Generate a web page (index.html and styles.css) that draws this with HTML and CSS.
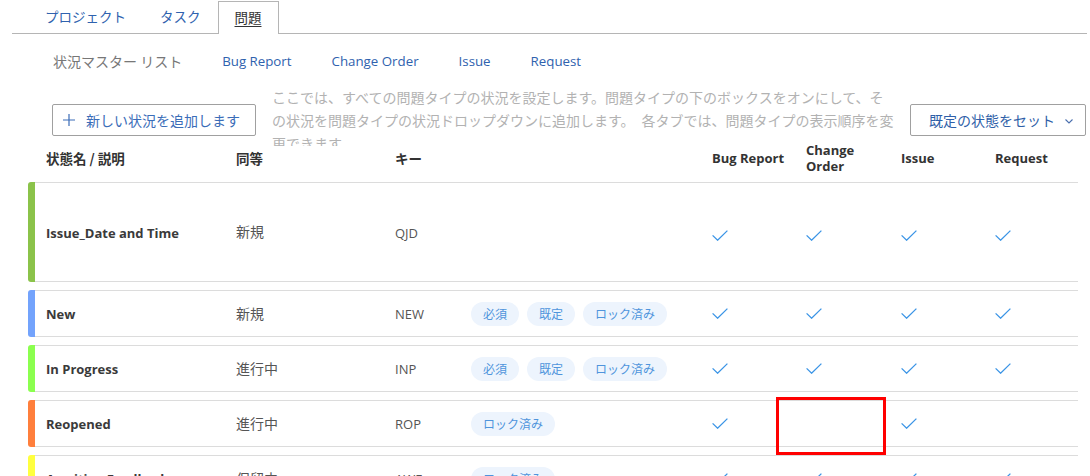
FILE: index.html
```html
<!DOCTYPE html>
<html lang="ja">
<head>
<meta charset="utf-8">
<title>問題</title>
<link rel="stylesheet" href="styles.css">
</head>
<body>
<nav class="tabs">
  <a class="tab">プロジェクト</a>
  <a class="tab">タスク</a>
  <a class="tab active"><span>問題</span></a>
</nav>

<div class="subnav">
  <span class="sub current">状況マスター リスト</span>
  <a class="sub">Bug Report</a>
  <a class="sub">Change Order</a>
  <a class="sub">Issue</a>
  <a class="sub">Request</a>
</div>

<div class="toolbar">
  <button class="btn add">
    <svg class="plus" width="12" height="12" viewBox="0 0 12 12"><path d="M6 0V12M0 6H12" stroke="#3b6db8" stroke-width="1.2" fill="none"/></svg>
    <span>新しい状況を追加します</span>
  </button>
  <p class="desc">ここでは、すべての問題タイプの状況を設定します。問題タイプの下のボックスをオンにして、その状況を問題タイプの状況ドロップダウンに追加します。　各タブでは、問題タイプの表示順序を変更できます。</p>
  <button class="btn select">
    <span>既定の状態をセット</span>
    <svg class="chev" width="8" height="5" viewBox="0 0 8 5"><path d="M0.5 0.5L4 4L7.5 0.5" stroke="#4a6fae" stroke-width="1.1" fill="none"/></svg>
  </button>
</div>

<div class="table">
  <div class="thead">
    <div>状態名 / 説明</div>
    <div>同等</div>
    <div>キー</div>
    <div></div>
    <div>Bug Report</div>
    <div>Change<br>Order</div>
    <div>Issue</div>
    <div>Request</div>
  </div>

  <div class="row tall">
    <div class="bar c-green"></div>
    <div class="cells">
      <div class="name">Issue_Date and Time</div>
      <div class="eq">新規</div>
      <div class="key">QJD</div>
      <div class="tags"></div>
      <div class="chk"><svg width="16" height="11" viewBox="0 0 16 11"><path d="M0.6 5.4L5.6 10.2L15.4 0.6"/></svg></div>
      <div class="chk"><svg width="16" height="11" viewBox="0 0 16 11"><path d="M0.6 5.4L5.6 10.2L15.4 0.6"/></svg></div>
      <div class="chk"><svg width="16" height="11" viewBox="0 0 16 11"><path d="M0.6 5.4L5.6 10.2L15.4 0.6"/></svg></div>
      <div class="chk"><svg width="16" height="11" viewBox="0 0 16 11"><path d="M0.6 5.4L5.6 10.2L15.4 0.6"/></svg></div>
    </div>
  </div>

  <div class="row">
    <div class="bar c-blue"></div>
    <div class="cells">
      <div class="name">New</div>
      <div class="eq">新規</div>
      <div class="key">NEW</div>
      <div class="tags"><span class="pill">必須</span><span class="pill">既定</span><span class="pill">ロック済み</span></div>
      <div class="chk"><svg width="16" height="11" viewBox="0 0 16 11"><path d="M0.6 5.4L5.6 10.2L15.4 0.6"/></svg></div>
      <div class="chk"><svg width="16" height="11" viewBox="0 0 16 11"><path d="M0.6 5.4L5.6 10.2L15.4 0.6"/></svg></div>
      <div class="chk"><svg width="16" height="11" viewBox="0 0 16 11"><path d="M0.6 5.4L5.6 10.2L15.4 0.6"/></svg></div>
      <div class="chk"><svg width="16" height="11" viewBox="0 0 16 11"><path d="M0.6 5.4L5.6 10.2L15.4 0.6"/></svg></div>
    </div>
  </div>

  <div class="row">
    <div class="bar c-lime"></div>
    <div class="cells">
      <div class="name">In Progress</div>
      <div class="eq">進行中</div>
      <div class="key">INP</div>
      <div class="tags"><span class="pill">必須</span><span class="pill">既定</span><span class="pill">ロック済み</span></div>
      <div class="chk"><svg width="16" height="11" viewBox="0 0 16 11"><path d="M0.6 5.4L5.6 10.2L15.4 0.6"/></svg></div>
      <div class="chk"><svg width="16" height="11" viewBox="0 0 16 11"><path d="M0.6 5.4L5.6 10.2L15.4 0.6"/></svg></div>
      <div class="chk"><svg width="16" height="11" viewBox="0 0 16 11"><path d="M0.6 5.4L5.6 10.2L15.4 0.6"/></svg></div>
      <div class="chk"><svg width="16" height="11" viewBox="0 0 16 11"><path d="M0.6 5.4L5.6 10.2L15.4 0.6"/></svg></div>
    </div>
  </div>

  <div class="row">
    <div class="bar c-orange"></div>
    <div class="cells">
      <div class="name">Reopened</div>
      <div class="eq">進行中</div>
      <div class="key">ROP</div>
      <div class="tags"><span class="pill">ロック済み</span></div>
      <div class="chk"><svg width="16" height="11" viewBox="0 0 16 11"><path d="M0.6 5.4L5.6 10.2L15.4 0.6"/></svg></div>
      <div class="chk"></div>
      <div class="chk"><svg width="16" height="11" viewBox="0 0 16 11"><path d="M0.6 5.4L5.6 10.2L15.4 0.6"/></svg></div>
      <div class="chk"></div>
    </div>
  </div>

  <div class="row">
    <div class="bar c-yellow"></div>
    <div class="cells">
      <div class="name">Awaiting Feedback</div>
      <div class="eq">保留中</div>
      <div class="key">AWF</div>
      <div class="tags"><span class="pill">ロック済み</span></div>
      <div class="chk"><svg width="16" height="11" viewBox="0 0 16 11"><path d="M0.6 5.4L5.6 10.2L15.4 0.6"/></svg></div>
      <div class="chk"><svg width="16" height="11" viewBox="0 0 16 11"><path d="M0.6 5.4L5.6 10.2L15.4 0.6"/></svg></div>
      <div class="chk"><svg width="16" height="11" viewBox="0 0 16 11"><path d="M0.6 5.4L5.6 10.2L15.4 0.6"/></svg></div>
      <div class="chk"><svg width="16" height="11" viewBox="0 0 16 11"><path d="M0.6 5.4L5.6 10.2L15.4 0.6"/></svg></div>
    </div>
  </div>
</div>

<div class="highlight"></div>
</body>
</html>
```

FILE: styles.css
```css
html, body {
  margin: 0;
  padding: 0;
  background: #fff;
  overflow: hidden;
}
body {
  width: 1090px;
  height: 476px;
  position: relative;
  font-family: "Open Sans", "Noto Sans CJK JP", sans-serif;
  color: #333;
}

/* tabs */
.tabs {
  display: flex;
  margin: 0 3px 0 12px;
  padding: 1px 0 0 16px;
  border-bottom: 1px solid #b5b5b5;
  height: 32px;
}
.tab {
  display: block;
  padding: 0 17px;
  height: 32px;
  line-height: 31px;
  font-size: 13.5px;
  color: #2f62ae;
  font-family: "Noto Sans CJK JP", sans-serif;
}
.tab.active {
  padding: 0 16px;
  border: 1px solid #b5b5b5;
  border-bottom: none;
  background: #fff;
  height: 33px;
  margin-bottom: -1px;
  color: #333;
  box-sizing: border-box;
}
.tab.active span {
  text-decoration: underline;
  text-underline-offset: 3px;
}

/* sub navigation */
.subnav {
  display: flex;
  gap: 40px;
  margin: 16px 0 0 53px;
  height: 22px;
  line-height: 22px;
  font-size: 13.3px;
}
.sub {
  color: #2f62ae;
}
.sub.current {
  color: #777;
  font-size: 14px;
  font-family: "Noto Sans CJK JP", sans-serif;
}

/* toolbar */
.toolbar {
  display: flex;
  align-items: flex-start;
  margin: 14px 0 0 52px;
  height: 49px;
}
.btn {
  box-sizing: border-box;
  height: 32px;
  margin-top: 18px;
  border: 1px solid #a0a0a0;
  border-radius: 2px;
  background: #fff;
  color: #3b6db8;
  font-family: "Noto Sans CJK JP", sans-serif;
  font-size: 14px;
  display: flex;
  align-items: center;
  padding: 0;
}
.add {
  width: 204px;
  padding-left: 10px;
  gap: 11px;
}
.desc {
  margin: 0 0 0 16px;
  width: 622px;
  height: 60px;
  overflow: hidden;
  font-family: "Noto Sans CJK JP", sans-serif;
  font-size: 14px;
  line-height: 23px;
  color: #b2b2b2;
  flex: none;
}
.select {
  margin-left: 16px;
  width: 176px;
  padding: 0 12px 0 18px;
  justify-content: space-between;
  color: #2f5fa8;
}
.chev {
  margin-top: 2px;
}

/* table */
.table {
  margin-left: 28px;
  width: 1050px;
}
.thead {
  display: grid;
  grid-template-columns: 190px 159px 76px 241px 94px 95px 94px 1fr;
  align-items: center;
  height: 46px;
  padding-bottom: 1px;
  padding-left: 18px;
  font-weight: 700;
  font-size: 13px;
  line-height: 16px;
  color: #333;
}
.thead > div:nth-child(-n+3) {
  font-family: "Noto Sans CJK JP", sans-serif;
  font-size: 13.5px;
}

.row {
  display: flex;
  margin-bottom: 8px;
  height: 47px;
}
.row.tall {
  height: 100px;
}
.bar {
  width: 7px;
  flex: none;
  border-radius: 3px 0 0 3px;
}
.c-green { background: #8bc34a; }
.c-blue { background: #73a3fc; }
.c-lime { background: #8bff4f; }
.c-orange { background: #ff7f3c; }
.c-yellow { background: #ffff3f; }

.cells {
  flex: 1;
  display: grid;
  grid-template-columns: 190px 159px 76px 241px 94px 95px 94px 1fr;
  align-items: center;
  padding-left: 11px;
  border-top: 1px solid #dcdcdc;
  border-bottom: 1px solid #dcdcdc;
  font-size: 13px;
}
.name {
  font-weight: 700;
  color: #3a3a3a;
}
.row.tall .name { margin-top: 2px; }
.eq {
  font-family: "Noto Sans CJK JP", sans-serif;
  font-size: 14px;
  color: #555;
  margin-top: -2px;
}
.key {
  color: #555;
}
.row.tall .key { margin-top: 2px; }
.tags {
  display: flex;
  gap: 8px;
}
.pill {
  display: inline-block;
  height: 24px;
  line-height: 24px;
  padding: 0 12px;
  border-radius: 12px;
  background: #edf4fd;
  color: #4f94dc;
  font-family: "Noto Sans CJK JP", sans-serif;
  font-size: 12px;
}
.chk {
  height: 11px;
  display: flex;
}
.chk svg path {
  fill: none;
  stroke: #3a94e6;
  stroke-width: 1.3;
}
.row.tall .chk {
  margin-top: 6px;
}

/* annotation */
.highlight {
  position: absolute;
  left: 776px;
  top: 397px;
  width: 110px;
  height: 58px;
  box-sizing: border-box;
  border: 3px solid #ff0000;
}
```
